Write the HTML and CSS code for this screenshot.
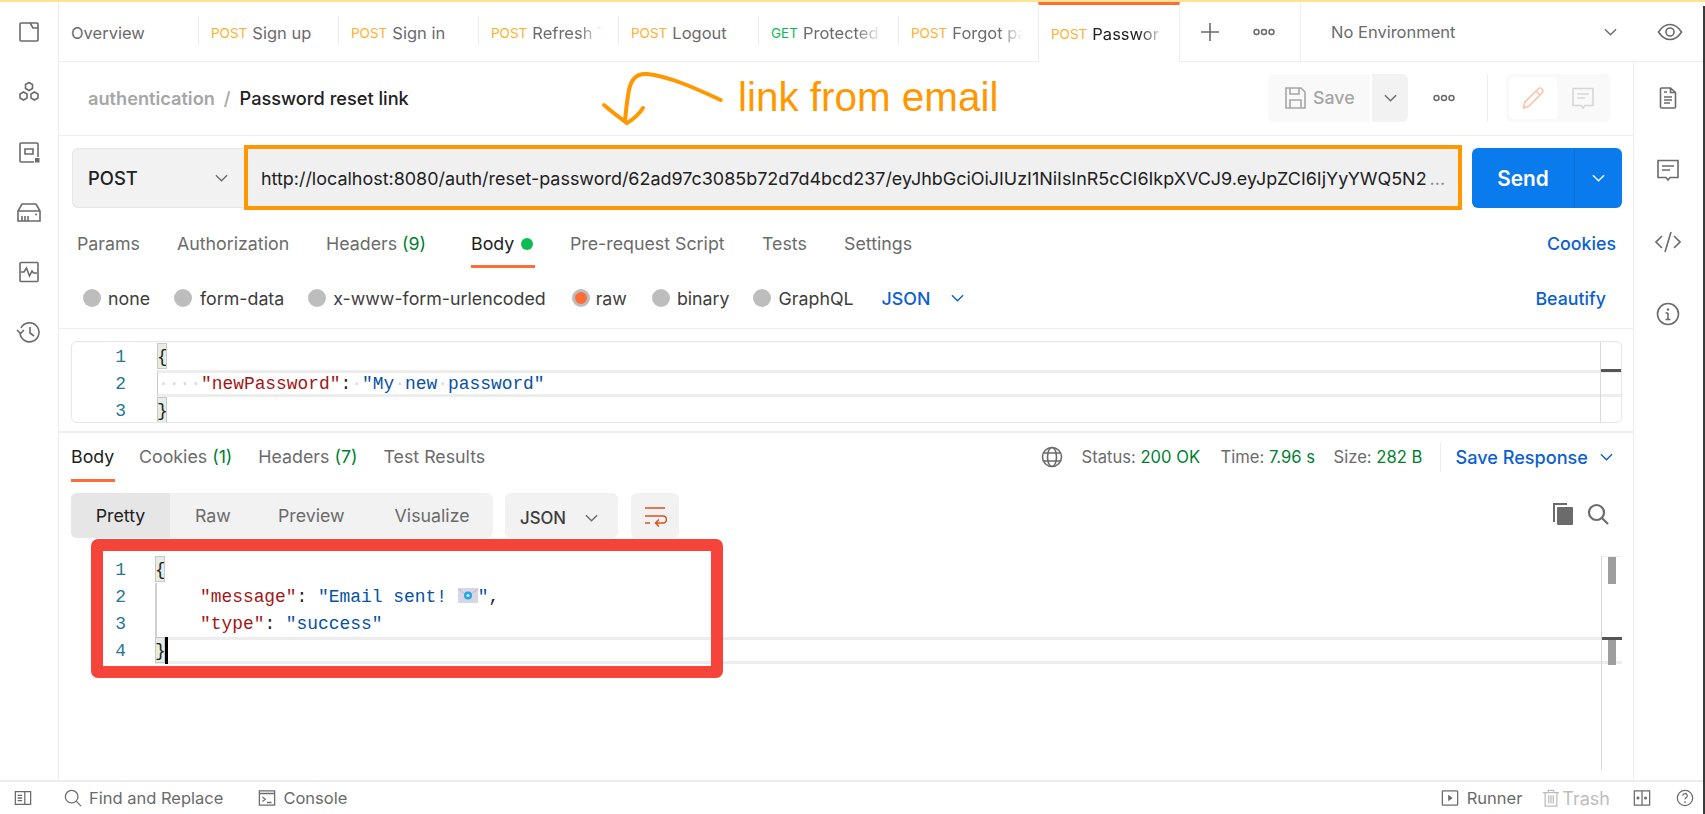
FILE: index.html
```html
<!DOCTYPE html>
<html lang="en">
<head>
<meta charset="utf-8">
<title>Password reset link</title>
<link rel="stylesheet" href="styles.css">
</head>
<body>
<div class="window">
  <div class="main">
    <nav class="rail-left">
      <svg class="ic" viewBox="0 0 24 24"><path d="M4 3h16a1 1 0 0 1 1 1v16a1 1 0 0 1-1 1H4a1 1 0 0 1-1-1V4a1 1 0 0 1 1-1z M13 3l3 5h5"/></svg>
      <svg class="ic" viewBox="0 0 24 24"><path d="M12 2.500l3.500 2v4l-3.500 2-3.500-2v-4z M6.500 12l3.500 2v4l-3.500 2-3.500-2v-4z M17.500 12l3.500 2v4l-3.500 2-3.500-2v-4z"/></svg>
      <svg class="ic" viewBox="0 0 24 24"><path d="M17 22H4a1 1 0 0 1-1-1V4a1 1 0 0 1 1-1h16a1 1 0 0 1 1 1v13 M8 9h8v5H8z"/><rect class="fill" x="18" y="18" width="4.500" height="4.500"/></svg>
      <svg class="ic wide" viewBox="0 0 26 24"><path d="M6 4h14l4 7v10H2V11z M2 11h22 M6 21v-5 M9 21v-5 M12 21v-5"/><circle class="fill" cx="20" cy="14.500" r="1"/></svg>
      <svg class="ic" viewBox="0 0 24 24"><path d="M4 2.500h16a1 1 0 0 1 1 1v17a1 1 0 0 1-1 1H4a1 1 0 0 1-1-1v-17a1 1 0 0 1 1-1z M4 12h3l2.500-4 3 8 2.500-5 1.500 2H20"/></svg>
      <svg class="ic wide" viewBox="0 0 26 24"><path d="M5 8a9.500 9.500 0 1 1-1 5 M1 10l3.500 3.500L8 10 M14 7v6l4 3"/></svg>
    </nav>
    <div class="content">
      <header class="tabbar">
        <div class="tab tab-overview"><span class="title">Overview</span></div>
        <div class="tab"><span class="verb post">POST</span><span class="title">Sign up</span></div>
        <div class="tab"><span class="verb post">POST</span><span class="title">Sign in</span></div>
        <div class="tab"><span class="verb post">POST</span><span class="title fade">Refresh T</span></div>
        <div class="tab"><span class="verb post">POST</span><span class="title">Logout</span></div>
        <div class="tab"><span class="verb get">GET</span><span class="title fade">Protected</span></div>
        <div class="tab"><span class="verb post">POST</span><span class="title fade">Forgot pa</span></div>
        <div class="tab tab-active"><span class="verb post">POST</span><span class="title fade">Passwor</span></div>
        <div class="tab-tools">
          <svg class="ic plus" viewBox="0 0 20 20"><path d="M10 1v18M1 10h18"/></svg>
          <svg class="dots" viewBox="0 0 22 8"><circle cx="3.500" cy="4" r="2.500"/><circle cx="11" cy="4" r="2.500"/><circle cx="18.500" cy="4" r="2.500"/></svg>
        </div>
        <div class="env">
          <span>No Environment</span>
          <svg class="chev" viewBox="0 0 14 8"><path d="M1 1l6 6 6-6"/></svg>
        </div>
        <div class="eye">
          <svg class="ic wide" viewBox="0 0 26 20"><path d="M1.500 10C5 4.500 9 2.500 13 2.500S21 4.500 24.500 10C21 15.500 17 17.500 13 17.500S5 15.500 1.500 10z"/><circle cx="13" cy="10" r="4"/></svg>
        </div>
      </header>
      <div class="work">
        <main class="pane">
          <div class="crumbs">
            <div class="crumb-path"><span class="crumb-parent">authentication</span><span class="crumb-sep">/</span><span class="crumb-name">Password reset link</span></div>
            <div class="crumb-actions">
              <div class="save"><svg class="ic" viewBox="0 0 24 24"><path d="M3 2h15l4 4v16H3z M7 2v6h9V2 M7 22v-8h11v8"/></svg><span>Save</span></div>
              <div class="save-more"><svg class="chev" viewBox="0 0 14 8"><path d="M1 1l6 6 6-6"/></svg></div>
              <svg class="dots" viewBox="0 0 22 8"><circle cx="3.500" cy="4" r="2.500"/><circle cx="11" cy="4" r="2.500"/><circle cx="18.500" cy="4" r="2.500"/></svg>
              <div class="vsep"></div>
              <div class="mode">
                <div class="mode-on"><svg class="ic pencil" viewBox="0 0 24 24"><path d="M2.500 22l1.500-6L17 3a2.500 2.500 0 0 1 4 4L8 20z M15 5l4 4"/></svg></div>
                <div class="mode-off"><svg class="ic" viewBox="0 0 24 24"><path d="M2 2.500h20v17h-8l-2 2.500-2-2.500H2z M6 8h12M6 12h8"/></svg></div>
              </div>
            </div>
          </div>
          <div class="url-row">
            <div class="method"><span>POST</span><svg class="chev" viewBox="0 0 14 8"><path d="M1 1l6 6 6-6"/></svg></div>
            <div class="url"><span class="url-text">http://localhost:8080/auth/reset-password/62ad97c3085b72d7d4bcd237/eyJhbGciOiJIUzI1NiIsInR5cCI6IkpXVCJ9.eyJpZCI6IjYyYWQ5N2</span><span class="url-more">...</span></div>
            <div class="send"><span class="send-label">Send</span><span class="send-more"><svg class="chev" viewBox="0 0 14 8"><path d="M1 1l6 6 6-6"/></svg></span></div>
          </div>
          <div class="req-tabs">
            <span class="rt rt-params">Params</span>
            <span class="rt rt-auth">Authorization</span>
            <span class="rt rt-head">Headers <em class="count">(9)</em></span>
            <span class="rt rt-body">Body <i class="dot"></i></span>
            <span class="rt rt-pre">Pre-request Script</span>
            <span class="rt rt-tests">Tests</span>
            <span class="rt rt-set">Settings</span>
            <span class="link rt-cookies">Cookies</span>
          </div>
          <div class="body-types">
            <label class="radio r-none"><i></i>none</label>
            <label class="radio r-form"><i></i>form-data</label>
            <label class="radio r-url"><i></i>x-www-form-urlencoded</label>
            <label class="radio r-raw on"><i></i>raw</label>
            <label class="radio r-bin"><i></i>binary</label>
            <label class="radio r-gql"><i></i>GraphQL</label>
            <span class="link lang">JSON<svg class="chev blue" viewBox="0 0 14 8"><path d="M1 1l6 6 6-6"/></svg></span>
            <span class="link beautify">Beautify</span>
          </div>
          <div class="req-editor">
            <div class="code-row"><span class="ln">1</span><span class="code"><b class="brace">{</b></span></div>
            <div class="code-row active"><span class="ln">2</span><span class="code guide"><span class="ws">····</span><span class="k">"newPassword"</span>:<span class="ws">·</span><span class="s">"My<span class="ws">·</span>new<span class="ws">·</span>password"</span></span></div>
            <div class="code-row"><span class="ln">3</span><span class="code"><b class="brace">}</b></span></div>
            <div class="overview"><i class="mark"></i></div>
          </div>
          <div class="res-head">
            <span class="rs rs-body">Body</span>
            <span class="rs rs-cookies">Cookies <em class="count">(1)</em></span>
            <span class="rs rs-headers">Headers <em class="count">(7)</em></span>
            <span class="rs rs-tests">Test Results</span>
            <div class="res-meta">
              <svg class="ic globe" viewBox="0 0 22 22"><circle cx="11" cy="11" r="9.500"/><ellipse cx="11" cy="11" rx="4.500" ry="9.500"/><path d="M2.500 7h17M2.500 15h17"/></svg>
              <span class="stat stat-a">Status: <em>200 OK</em></span>
              <span class="stat stat-b">Time: <em>7.96 s</em></span>
              <span class="stat stat-c">Size: <em>282 B</em></span>
              <span class="vsep short"></span>
              <span class="link save-res">Save Response<svg class="chev blue" viewBox="0 0 14 8"><path d="M1 1l6 6 6-6"/></svg></span>
            </div>
          </div>
          <div class="res-tools">
            <div class="seg"><span class="seg-on">Pretty</span><span class="seg-raw">Raw</span><span class="seg-prev">Preview</span><span class="seg-vis">Visualize</span></div>
            <div class="fmt"><span>JSON</span><svg class="chev" viewBox="0 0 14 8"><path d="M1 1l6 6 6-6"/></svg></div>
            <div class="wrap"><svg class="wrap-ic" viewBox="0 0 24 24"><path d="M2 4h20M2 12h18a3 3 0 0 1 0 7h-7 M16 15.500L12.500 19l3.500 3.500 M2 19h5"/></svg></div>
            <div class="res-icons">
              <svg class="copy" viewBox="0 0 22 24"><path d="M2 20V2h13" fill="none" stroke="#6b6b6b" stroke-width="2"/><rect x="5" y="5" width="16" height="18" rx="1" fill="#6b6b6b"/></svg>
              <svg class="ic search" viewBox="0 0 22 22"><circle cx="9.500" cy="9.500" r="7.500"/><path d="M15 15l6 6"/></svg>
            </div>
          </div>
          <div class="res-editor">
            <div class="annot-red"></div>
            <div class="code-row"><span class="ln">1</span><span class="code"><b class="brace">{</b></span></div>
            <div class="code-row"><span class="ln">2</span><span class="code guide plain">    <span class="k">"message"</span>: <span class="s">"Email sent! <svg class="mail" viewBox="0 0 20 15"><rect width="20" height="15" rx="1" fill="#d9d5e4"/><path d="M0 1l10 7 10-7" fill="none" stroke="#b9b3cc"/><circle cx="10" cy="7.500" r="4" fill="#22a7e0"/><circle cx="10" cy="7.500" r="1.500" fill="#d4f0fb"/></svg>"</span>,</span></div>
            <div class="code-row"><span class="ln">3</span><span class="code guide plain">    <span class="k">"type"</span>: <span class="s">"success"</span></span></div>
            <div class="code-row solid"><span class="ln">4</span><span class="code"><b class="brace">}</b><i class="caret"></i></span></div>
            <div class="overview tall"><i class="thumb t1"></i><i class="thumb t2"></i><i class="mark"></i></div>
          </div>
        </main>
        <aside class="rail-right">
          <svg class="ic" viewBox="0 0 24 24"><path d="M14.500 2H5.500a1 1 0 0 0-1 1v18a1 1 0 0 0 1 1h13a1 1 0 0 0 1-1V6.500z M14.500 2v4.500h5 M8 6h3 M8 11h8 M8 14h8 M8 17h6"/></svg>
          <svg class="ic" viewBox="0 0 24 24"><path d="M2 2.500h20v17h-8l-2 2.500-2-2.500H2z M6 8h12M6 12h8"/></svg>
          <svg class="ic wide" viewBox="0 0 26 24"><path d="M7 6l-6 6 6 6 M19 6l6 6-6 6 M16 2L10 22"/></svg>
          <svg class="ic wide" viewBox="0 0 24 24"><circle cx="12" cy="12" r="10.500"/><path d="M12 11v6 M9.500 11H12 M9.500 17.500h5"/><circle class="fill" cx="12" cy="7.500" r="1.200"/></svg>
        </aside>
      </div>
      <div class="note">
        <svg class="arrow" viewBox="600 70 125 56"><path d="M720.700 100C695 88 668 76 647 74C636 73 631 80 629 90C627 100 626 110 625 121 M604 105C612 112 620 118 627 123C632 120 638 116 643 108"/></svg>
        <span class="note-text">link from email</span>
      </div>
    </div>
  </div>
  <footer class="status">
    <svg class="ic st-panel" viewBox="0 0 20 20"><path d="M1.500 3h17v14h-17z M12 3v14 M4 7h5M4 10h5M4 13h5"/></svg>
    <span class="st-item st-find"><svg class="ic" viewBox="0 0 20 20"><circle cx="8.500" cy="8.500" r="7"/><path d="M13.500 13.500l5.500 5.500"/></svg>Find and Replace</span>
    <span class="st-item st-console"><svg class="ic" viewBox="0 0 20 20"><path d="M1.500 2h17v16h-17z M1.500 5h17 M5 9l3 2.500-3 2.500 M10 15h5"/></svg>Console</span>
    <span class="st-item st-runner"><svg class="ic" viewBox="0 0 20 20"><path d="M2.500 2h15a1 1 0 0 1 1 1v14a1 1 0 0 1-1 1h-15a1 1 0 0 1-1-1V3a1 1 0 0 1 1-1z"/><path class="fill" d="M8 6.500l5 3.500-5 3.500z"/></svg>Runner</span>
    <span class="st-item st-trash"><svg class="ic" viewBox="0 0 20 20"><path d="M1 4h18 M7 4V1.500h6V4 M3.500 4v15h13V4 M7.500 7v9 M10 7v9 M12.500 7v9"/></svg>Trash</span>
    <svg class="ic st-boot" viewBox="0 0 20 20"><path d="M1.500 2h17v16h-17z M10 2v16"/><rect class="fill" x="4" y="8.500" width="3" height="3"/><circle class="fill" cx="14" cy="10" r="1.700"/></svg>
    <svg class="ic st-help" viewBox="0 0 20 20"><circle cx="10" cy="10" r="8.500"/><path d="M7.500 7.500a2.500 2.500 0 1 1 3.500 2.300c-.8.400-1 .9-1 1.700"/><circle class="fill" cx="10" cy="14.500" r="1"/></svg>
  </footer>
</div>
</body>
</html>
```
FILE: styles.css
```css
* { box-sizing: border-box; }
html, body { margin: 0; height: 100%; }
body {
  width: 1705px;
  height: 814px;
  overflow: hidden;
  background: linear-gradient(#ffe48f 0 2px, #fff 2px);
  font-family: Inter, "Liberation Sans", sans-serif;
  font-size: 17.800px;
  color: #6b6b6b;
  padding: 2px 2px 0 0;
  position: relative;
}
body::after {
  content: "";
  position: absolute;
  top: 6px; bottom: 0; right: 0;
  width: 2px;
  background: #3a3a3a;
}
em { font-style: normal; }
.ic { fill: none; stroke: #6b6b6b; stroke-width: 1.6; width: 24px; height: 24px; display: block; flex: none; }
.ic.wide { width: 26px; }
.ic .fill { fill: #6b6b6b; stroke: none; }
.chev { fill: none; stroke: #6b6b6b; stroke-width: 1.500; width: 13px; height: 8px; flex: none; }
.chev.blue { stroke: #0b5fd1; }
.dots { fill: none; stroke: #6b6b6b; stroke-width: 1.500; width: 22px; height: 8px; flex: none; }

.window { width: 1703px; height: 812px; display: flex; flex-direction: column; background: #fff; overflow: hidden; }
.main { flex: 1; display: flex; min-height: 0; }

.rail-left { width: 59px; flex: none; border-right: 1px solid #ededed; display: flex; flex-direction: column; align-items: center; gap: 36px; padding-top: 18px; padding-right: 1px; }

.content { flex: 1; min-width: 0; display: flex; flex-direction: column; position: relative; }

.tabbar { height: 60px; flex: none; display: flex; align-items: stretch; border-bottom: 1px solid #ededed; font-size: 16.500px; }
.tab { width: 140px; flex: none; display: flex; align-items: center; padding: 2px 14px 0 13px; position: relative; white-space: nowrap; overflow: hidden; }
.tab::before { content: ""; position: absolute; left: 0; top: 14px; height: 30px; width: 1px; background: #ededed; }
.tab-overview { width: 139px; padding-left: 12px; }
.tab-overview::before { display: none; }
.tab-active { width: 142px; height: 60px; border-top: 3px solid #ff6c37; border-left: 1px solid #ededed; border-right: 1px solid #ededed; padding: 0 14px 0 12px; background: #fff; }
.tab-active::before { display: none; }
.tab-active .title { color: #212121; }
.verb { font-size: 13.500px; margin-right: 5px; flex: none; }
.post { color: #ffb02e; }
.get { color: #0cbb52; }
.title { overflow: hidden; flex: 1; min-width: 0; }
.fade { -webkit-mask-image: linear-gradient(90deg, #000 65%, transparent 98%); mask-image: linear-gradient(90deg, #000 65%, transparent 98%); }
.tab-tools { width: 121px; flex: none; display: flex; align-items: center; gap: 33px; padding-left: 20px; border-right: 1px solid #ededed; }
.plus { width: 20px; height: 20px; }
.env { width: 333px; flex: none; display: flex; align-items: center; justify-content: space-between; padding: 0 17px 0 30px; }
.eye { flex: 1; display: flex; align-items: center; justify-content: flex-end; padding-right: 20px; }

.work { flex: 1; display: flex; min-height: 0; }
.pane { flex: 1; min-width: 0; display: flex; flex-direction: column; }
.rail-right { width: 70px; flex: none; border-left: 1px solid #ededed; display: flex; flex-direction: column; align-items: center; gap: 48px; padding-top: 24px; padding-right: 1px; }
.rail-right .ic { height: 24px; }

.crumbs { height: 74px; flex: none; display: flex; align-items: center; justify-content: space-between; border-bottom: 1px solid #ededed; padding: 0 22px 2px 29px; font-size: 18.200px; }
.crumb-path { display: flex; align-items: center; font-weight: 600; }
.crumb-parent { color: #a6a6a6; }
.crumb-sep { color: #a6a6a6; font-weight: 500; margin: 0 9px; }
.crumb-name { color: #212121; font-weight: 500; }
.crumb-actions { display: flex; align-items: center; height: 48px; }
.save { width: 102px; height: 48px; background: #f9f9f9; border-radius: 6px 0 0 6px; display: flex; align-items: center; gap: 6px; padding-left: 15px; color: #a6a6a6; font-weight: 500; font-size: 17.800px; margin-right: 2px; }
.save .ic { stroke: #a6a6a6; }
.save-more { width: 36px; height: 48px; background: #f2f2f2; border-radius: 0 6px 6px 0; display: flex; align-items: center; justify-content: center; margin-right: 25px; }
.vsep { width: 1px; height: 48px; background: #ededed; margin-left: 32px; margin-right: 18px; }
.vsep.short { height: 30px; margin: 0 15px 0 18px; flex: none; }
.mode { width: 105px; height: 48px; background: #f9f9f9; border-radius: 6px; padding: 3px; display: flex; align-items: stretch; }
.mode-on { width: 48px; background: #fff; border-radius: 5px; display: flex; align-items: center; justify-content: center; }
.mode-off { flex: 1; display: flex; align-items: center; justify-content: center; }
.mode-off .ic { stroke: #d6d6d6; }
.pencil { stroke: #ffc1aa; }

.url-row { display: flex; align-items: flex-start; height: 72px; padding: 12px 11px 0 13px; flex: none; }
.method { width: 176px; height: 60px; background: #f2f2f2; border: 1px solid #e6e6e6; border-right: none; border-radius: 6px 0 0 6px; display: flex; align-items: center; justify-content: space-between; padding: 0 20px 0 15px; font-weight: 500; color: #212121; font-size: 18.400px; }
.url { width: 1211px; height: 57px; margin-top: 1px; background: #f0f0f0; outline: 4px solid #ff9800; display: flex; align-items: center; padding: 2px 0 0 13px; min-width: 0; }
.url-text { font-size: 17.950px; color: #212121; white-space: nowrap; }
.url-more { font-size: 17.950px; color: #8a8a8a; margin-left: 3px; white-space: nowrap; }
.send { width: 150px; height: 60px; margin-left: 14px; background: #097bed; border-radius: 6px; display: flex; color: #fff; font-weight: 600; font-size: 20.800px; flex: none; }
.send-label { width: 103px; display: flex; align-items: center; justify-content: center; border-right: 1px solid #0a6fd4; }
.send-more { flex: 1; display: flex; align-items: center; justify-content: center; }
.send-more .chev { stroke: #fff; }

.link { color: #0b5fd1; font-weight: 500; }
.req-tabs { height: 60px; flex: none; padding: 0 17px 0 18px; display: flex; align-items: flex-start; }
.rt { height: 60px; line-height: 72px; white-space: nowrap; }
.rt-params { width: 100px; }
.rt-auth { width: 149px; }
.rt-head { width: 145px; }
.rt-body { width: 64px; color: #212121; border-bottom: 3px solid #ff6c37; display: flex; align-items: flex-start; gap: 7px; margin-right: 35px; }
.rt-pre { width: 192px; }
.rt-tests { width: 82px; }
.rt-set { width: 100px; }
.rt-cookies { margin-left: auto; line-height: 72px; }
.count { color: #007f31; }
.dot { width: 12px; height: 12px; border-radius: 50%; background: #0cbb52; margin-top: 30px; flex: none; }

.body-types { height: 61px; flex: none; border-bottom: 1px solid #ededed; display: flex; align-items: center; padding: 0 27px 0 24px; }
.radio { display: flex; align-items: center; gap: 7px; white-space: nowrap; color: #3d3d3d; margin-right: 24px; }
.radio i { width: 18px; height: 18px; border-radius: 50%; background: #bdbdbd; flex: none; }
.radio.on i { background: #ff6c37; border: 3.500px solid #bdbdbd; }
.r-form { gap: 8px; }
.r-url { margin-right: 26px; }
.r-raw { gap: 6px; margin-right: 25px; }
.r-bin { margin-right: 23px; }
.r-gql { margin-right: 28px; gap: 8px; }
.lang { display: flex; align-items: center; gap: 21px; }
.beautify { margin-left: auto; }

.req-editor { height: 82px; margin: 12px 11px 8px 12px; border: 1px solid #e6e6e6; border-radius: 6px; padding-top: 1px; flex: none; position: relative; overflow: hidden; }
.code-row { height: 27px; display: flex; font-family: "Liberation Mono", monospace; font-size: 17.900px; line-height: 29px; white-space: pre; }
.ln { width: 54px; text-align: right; color: #237893; flex: none; }
.code { flex: 1; color: #212121; position: relative; }
.req-editor .code { margin-left: 31px; }
.active .code { border-top: 3px solid #ededed; border-bottom: 3px solid #ededed; line-height: 23px; }
.req-editor .code.guide { border-left: 1px solid #c8c8c8; }
.brace { font-weight: 400; display: inline-block; width: 10px; height: 26px; background: #e6ede4; outline: 1px solid #c8c8c8; outline-offset: -1px; line-height: 28px; color: #212121; vertical-align: top; }
.ws { color: #d8d8d8; }
.k { color: #a31515; }
.s { color: #0451a5; }
.overview { position: absolute; right: 0; top: 0; bottom: 0; width: 21px; border-left: 1px solid #d8d8d8; }
.mark { position: absolute; left: 0; right: 0; top: 27px; height: 3px; background: #555; }

.res-head { height: 51px; flex: none; border-top: 2px solid #ededed; display: flex; align-items: flex-start; padding: 0 20px 0 12px; gap: 24px; }
.rs { line-height: 48px; height: 49px; white-space: nowrap; }
.rs-body { color: #212121; border-bottom: 3px solid #ff6c37; width: 44px; }
.rs-headers, .rs-tests { margin-left: 2px; }
.res-meta { margin-left: auto; display: flex; align-items: center; height: 47px; font-size: 16.600px; }
.globe { width: 22px; height: 22px; margin-right: 19px; }
.stat { white-space: nowrap; flex: none; }
.stat-a { width: 139px; }
.stat-b { width: 113px; }
.stat-c { width: 88px; }
.stat em { color: #007f31; }
.save-res { display: flex; align-items: center; gap: 12px; font-size: 18.100px; white-space: nowrap; }
.res-tools { height: 45px; margin-top: 11px; flex: none; display: flex; align-items: stretch; padding: 0 12px 0 12px; }
.seg { width: 422px; background: #f2f2f2; border-radius: 6px; display: flex; align-items: center; }
.seg-on { width: 99px; height: 45px; line-height: 45px; text-align: center; background: #e6e6e6; border-radius: 6px 0 0 6px; color: #212121; }
.seg-raw { margin-left: 25px; }
.seg-prev { margin-left: 47px; }
.seg-vis { margin-left: 50px; }
.fmt { width: 113px; margin-left: 12px; background: #f2f2f2; border-radius: 6px; display: flex; align-items: center; justify-content: space-between; padding: 4px 20px 0 15px; font-weight: 500; color: #3d3d3d; font-size: 16.800px; }
.wrap { width: 48px; margin-left: 13px; background: #f2f2f2; border-radius: 6px; display: flex; align-items: center; justify-content: center; }
.wrap-ic { width: 24px; height: 24px; fill: none; stroke: #e0501f; stroke-width: 1.600; }
.res-icons { margin-left: auto; display: flex; align-items: center; gap: 13px; padding: 0 12px 3px 0; }
.copy { width: 22px; height: 24px; }
.search { width: 22px; height: 22px; stroke-width: 2.200; }

.res-editor { flex: 1; margin: 18px 11px 10px 13px; position: relative; min-height: 0; }
.res-editor .code { margin-left: 29px; }
.res-editor .code.plain { border-left: 2px solid #d0d0d0; }
.solid .code { background: linear-gradient(#ededed 0 3px, transparent 3px calc(100% - 3px), #ededed calc(100% - 3px)); }
.caret { display: inline-block; width: 3px; height: 27px; background: #000; vertical-align: top; }
.mail { width: 20px; height: 15px; vertical-align: -1px; }
.overview.tall { border-top: 1px solid #ededed; }
.overview.tall .mark { top: 80px; }
.thumb { position: absolute; left: 6px; width: 8px; background: #9e9e9e; }
.t1 { top: 0; height: 27px; }
.t2 { top: 81px; height: 27px; }
.annot-red { position: absolute; left: 19px; top: -17px; width: 632px; height: 139px; border: 12px solid #f7443a; border-radius: 7px; z-index: 2; pointer-events: none; }

.note { position: absolute; left: 541px; top: 68px; display: flex; align-items: center; height: 56px; pointer-events: none; }
.arrow { width: 125px; height: 56px; fill: none; stroke: #ff9800; stroke-width: 4; stroke-linecap: round; stroke-linejoin: round; flex: none; }
.note-text { font-family: "Liberation Sans", Arial, sans-serif; font-size: 40.400px; color: #ff9800; margin: 0 0 2px 13px; white-space: nowrap; }

.status { height: 34px; flex: none; border-top: 2px solid #ededed; display: flex; align-items: center; font-size: 16.500px; }
.status .ic { width: 18px; height: 18px; stroke-width: 1.400; }
.st-panel { margin-left: 14px; }
.st-item { display: flex; align-items: center; white-space: nowrap; gap: 7px; }
.st-find { margin-left: 32px; }
.st-console { margin-left: 35px; }
.st-runner { margin-left: auto; gap: 8px; }
.st-trash { margin-left: 20px; color: #bdbdbd; gap: 2px; font-size: 18px; }
.st-trash .ic { stroke: #bdbdbd; }
.st-boot { margin-left: 23px; }
.st-help { margin-left: 25px; margin-right: 9px; }
```
